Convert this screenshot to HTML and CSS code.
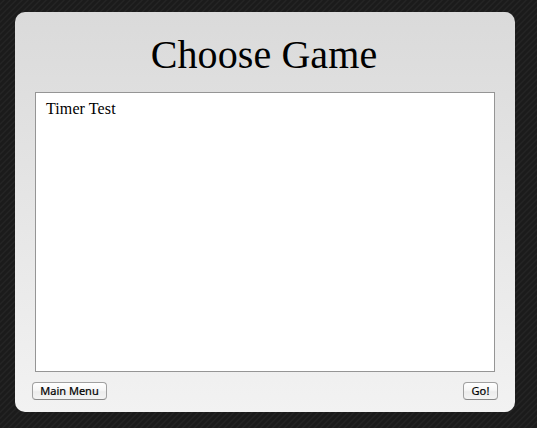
FILE: index.html
```html
<!DOCTYPE html>
<html lang="en">
<head>
<meta charset="utf-8">
<title>Choose Game</title>
<link rel="stylesheet" href="styles.css">
</head>
<body>
<main class="panel">
  <h1 class="title">Choose Game</h1>
  <div class="games">
    <div class="game">Timer Test</div>
  </div>
  <div class="actions">
    <button class="button menu">Main Menu</button>
    <button class="button go">Go!</button>
  </div>
</main>
</body>
</html>
```
FILE: styles.css
```css
* {
  box-sizing: border-box;
}

body {
  margin: 0;
  padding: 12px 22px 16px 15px;
  height: 428px;
  overflow: hidden;
  background: repeating-linear-gradient(135deg, #1b1b1b 0, #1b1b1b 1.9px, #242424 2.7px, #242424 3.3px, #1b1b1b 4.243px);
  font-family: "Liberation Serif", "Times New Roman", serif;
  color: #000;
}

.panel {
  display: flex;
  flex-direction: column;
  width: 500px;
  height: 400px;
  padding: 20px 17px 12px;
  border-radius: 10px;
  background: linear-gradient(#dadada, #f2f2f2);
}

.title {
  margin: 0;
  padding-right: 2px;
  height: 60px;
  font-size: 40px;
  line-height: 46px;
  font-weight: normal;
  letter-spacing: 0.1px;
  text-align: center;
}

.games {
  height: 280px;
  margin: 0 3px;
  padding: 7px 10px;
  border: 1px solid #959595;
  background: #fff;
}

.game {
  font-size: 16px;
  line-height: 18px;
  letter-spacing: 0.1px;
}

.actions {
  display: flex;
  justify-content: space-between;
  margin-top: 10px;
}

.button {
  height: 18px;
  padding: 0;
  border: 1px solid #a0a0a0;
  border-bottom-color: #888;
  border-radius: 4px;
  background: linear-gradient(#fff 0, #f6f6f6 45%, #ececec 55%, #f4f4f4 100%);
  font: 11px/16px "Noto Sans", sans-serif;
  color: #000;
  -webkit-text-stroke: 0.2px #000;
}

.menu {
  width: 75px;
}

.go {
  width: 35px;
  letter-spacing: 0.2px;
}
```
